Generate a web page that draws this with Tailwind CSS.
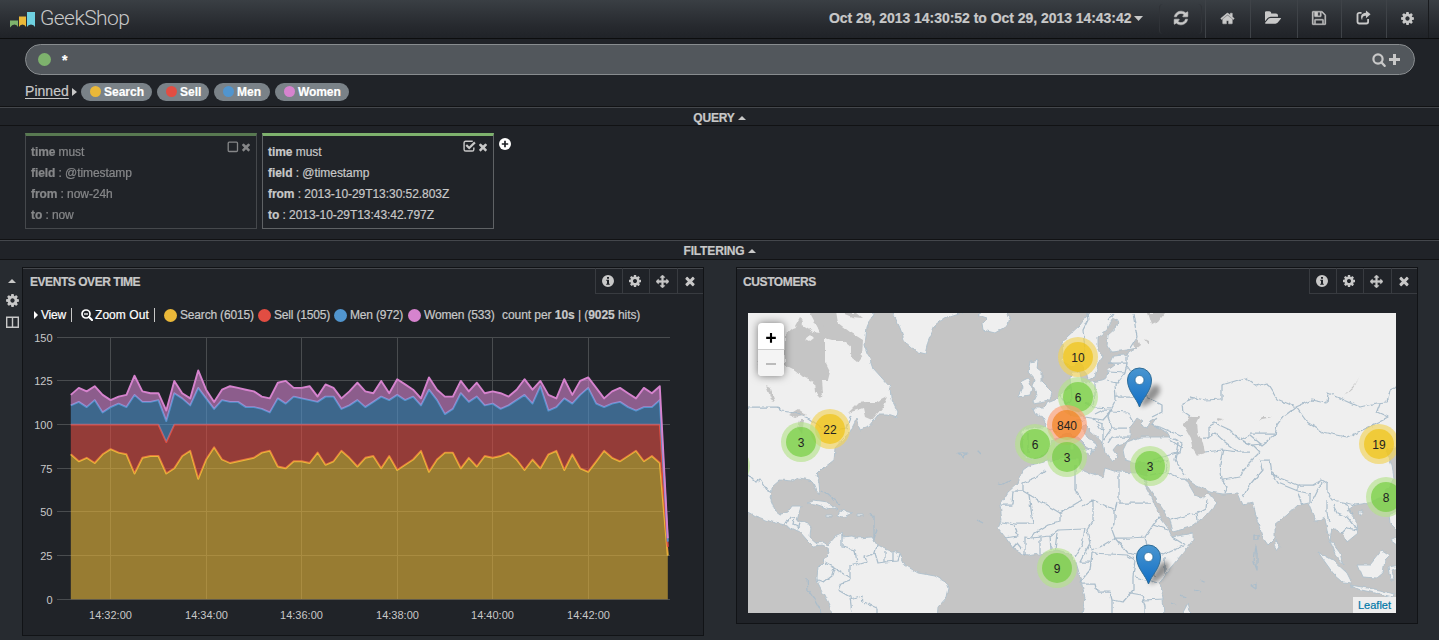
<!DOCTYPE html>
<html lang="en">
<head>
<meta charset="utf-8">
<title>GeekShop</title>
<script src="https://cdn.jsdelivr.net/npm/@tailwindcss/browser@4"></script>
</head>
<body class="w-[1439px] h-[640px] overflow-hidden bg-[#272b30] text-[#c8c8c8] text-[12px] font-['Liberation_Sans',Arial,sans-serif] [-webkit-text-stroke:0.2px_currentColor]">

<svg class="hidden">
  <defs>
    <symbol id="times" viewBox="0 0 1792 1792"><path d="M1490 1322q0 40-28 68l-136 136q-28 28-68 28t-68-28l-294-294-294 294q-28 28-68 28t-68-28l-136-136q-28-28-28-68t28-68l294-294-294-294q-28-28-28-68t28-68l136-136q28-28 68-28t68 28l294 294 294-294q28-28 68-28t68 28l136 136q28 28 28 68t-28 68l-294 294 294 294q28 28 28 68z"/></symbol>
    <symbol id="cog" viewBox="0 0 1792 1792"><path d="M1152 896q0-106-75-181t-181-75-181 75-75 181 75 181 181 75 181-75 75-181zm512-109v222q0 12-8 23t-20 13l-185 28q-19 54-39 91 35 50 107 138 10 12 10 25t-9 23q-27 37-99 108t-94 71q-12 0-26-9l-138-108q-44 23-91 38-16 136-29 186-7 28-36 28h-222q-14 0-24.500-8.500t-11.500-21.500l-28-184q-49-16-90-37l-141 107q-10 9-25 9-14 0-25-11-126-114-165-168-7-10-7-23 0-12 8-23 15-21 51-66.500t54-70.500q-27-50-41-99l-183-27q-13-2-21-12.500t-8-23.500v-222q0-12 8-23t19-13l186-28q14-46 39-92-40-57-107-138-10-12-10-24 0-10 9-23 26-36 98.500-107.500t94.500-71.500q13 0 26 10l138 107q44-23 91-38 16-136 29-186 7-28 36-28h222q14 0 24.500 8.500t11.500 21.500l28 184q49 16 90 37l142-107q9-9 24-9 13 0 25 10 129 119 165 170 7 8 7 22 0 12-8 23-15 21-51 66.500t-54 70.500q26 50 41 98l183 28q13 2 21 12.500t8 23.500z"/></symbol>
    <symbol id="refresh" viewBox="0 0 1792 1792"><path d="M1639 1056q0 5-1 7-64 268-268 434.500t-478 166.500q-146 0-282.500-55t-243.500-157l-129 129q-19 19-45 19t-45-19-19-45v-448q0-26 19-45t45-19h448q26 0 45 19t19 45-19 45l-137 137q71 66 161 102t187 36q134 0 250-65t186-179q11-17 53-117 8-23 30-23h192q13 0 22.500 9.500t9.500 22.500zm25-800v448q0 26-19 45t-45 19h-448q-26 0-45-19t-19-45 19-45l138-138q-148-137-349-137-134 0-250 65t-186 179q-11 17-53 117-8 23-30 23h-199q-13 0-22.500-9.500t-9.500-22.500v-7q65-268 270-434.500t480-166.500q146 0 284 55.500t245 156.500l130-129q19-19 45-19t45 19 19 45z" stroke="currentColor" stroke-width="60"/></symbol>
    <symbol id="home" viewBox="0 0 1792 1792"><path d="M1472 992v480q0 26-19 45t-45 19h-384v-384h-256v384h-384q-26 0-45-19t-19-45v-480q0-1 .5-3t.5-3l575-474 575 474q1 2 1 6zm223-69l-62 74q-8 9-21 11h-3q-13 0-21-7l-692-577-692 577q-12 8-24 7-13-2-21-11l-62-74q-8-10-7-23.500t11-21.500l719-599q32-26 76-26t76 26l244 204v-195q0-14 9-23t23-9h192q14 0 23 9t9 23v408l219 182q10 8 11 21.500t-7 23.500z" stroke="currentColor" stroke-width="50"/></symbol>
    <symbol id="folder" viewBox="0 0 1816 1792"><path d="M1815 952q0 31-31 66l-336 396q-43 51-120.500 86.500t-143.500 35.500h-1088q-34 0-60.500-13t-26.500-43q0-31 31-66l336-396q43-51 120.500-86.500t143.500-35.500h1088q34 0 60.500 13t26.500 43zm-343-344v160h-832q-94 0-197 47.500t-164 119.500l-337 396-5 6q0-4-.5-12.500t-.5-12.500v-960q0-92 66-158t158-66h320q92 0 158 66t66 158v32h544q92 0 158 66t66 158z"/></symbol>
    <symbol id="save" viewBox="0 0 1792 1792"><path d="M512 1536h768v-384h-768v384zm896 0h128v-896q0-14-10-38.500t-20-34.500l-281-281q-10-10-34-20t-39-10v416q0 40-28 68t-68 28h-576q-40 0-68-28t-28-68v-416h-128v1280h128v-416q0-40 28-68t68-28h832q40 0 68 28t28 68v416zm-384-928v-320q0-13-9.500-22.500t-22.500-9.500h-192q-13 0-22.500 9.500t-9.500 22.500v320q0 13 9.500 22.500t22.500 9.500h192q13 0 22.500-9.500t9.500-22.500zm640 32v928q0 40-28 68t-68 28h-1344q-40 0-68-28t-28-68v-1344q0-40 28-68t68-28h928q40 0 88 20t76 48l280 280q28 28 48 76t20 88z" stroke="currentColor" stroke-width="40"/></symbol>
    <symbol id="share" viewBox="0 0 14 14"><path d="M11.300 8.500V11a1.600 1.600 0 0 1-1.600 1.600H3A1.600 1.600 0 0 1 1.400 11V4.300A1.600 1.600 0 0 1 3 2.700h2.200" fill="none" stroke="currentColor" stroke-width="1.700"/><path d="M9.300.4 13.600 4 9.300 7.700V5.400C6.900 5.200 5.800 6.300 5.700 9.600 3.600 5.800 5.200 2.800 9.300 2.600z"/></symbol>
    <symbol id="move" viewBox="0 0 1792 1792"><path d="M1792 896q0 26-19 45l-256 256q-19 19-45 19t-45-19-19-45v-128h-384v384h128q26 0 45 19t19 45-19 45l-256 256q-19 19-45 19t-45-19l-256-256q-19-19-19-45t19-45 45-19h128v-384h-384v128q0 26-19 45t-45 19-45-19l-256-256q-19-19-19-45t19-45l256-256q19-19 45-19t45 19 19 45v128h384v-384h-128q-26 0-45-19t-19-45 19-45l256-256q19-19 45-19t45 19l256 256q19 19 19 45t-19 45-45 19h-128v384h384v-128q0-26 19-45t45-19 45 19l256 256q19 19 19 45z" stroke="currentColor" stroke-width="50"/></symbol>
    <symbol id="info" viewBox="0 0 12 12"><path fill-rule="evenodd" d="M6 0a6 6 0 1 1 0 12A6 6 0 0 1 6 0zM5 2v1.700h2V2zM4.200 4.800v1H5v2.900h-.8v1h3.600v-1H7V4.800z"/></symbol>
    <symbol id="search" viewBox="0 0 14 14"><circle cx="6" cy="6" r="4.600" fill="none" stroke="currentColor" stroke-width="2.200"/><path d="M9.300 9.300l3.300 3.500" stroke="currentColor" stroke-width="2.400" stroke-linecap="round"/></symbol>
    <symbol id="zoomout" viewBox="0 0 12 12"><circle cx="5" cy="5" r="4" fill="none" stroke="currentColor" stroke-width="1.700"/><path d="M8 8l3 3" stroke="currentColor" stroke-width="2.100" stroke-linecap="round"/><path d="M3 5h4" stroke="currentColor" stroke-width="1.300"/></symbol>
  </defs>
</svg>

<header class="flex h-[39px] items-stretch justify-between border-b border-[#0c0d0e] bg-linear-to-b from-[#3a3f44] via-[#26292e] via-70% to-[#202328]">
  <div class="flex items-center gap-[5px] pl-[10px]">
    <svg class="mt-[1px] h-[16px] w-[26px]" viewBox="0 0 26 16"><path fill="#7eb26d" d="M0 8.500h8v6.500q-1-2.500-3.500-2.500T0 15.500z"/><path fill="#eab839" d="M9 4.500h7v10.500q-1-2.500-3.500-2.500T9 15z"/><path fill="#6ed0e0" d="M17 0h8v15q-1-2.500-4-2.500t-4 2.500z"/></svg>
    <span class="-ml-px text-[21px] font-light tracking-[-0.55px] text-[#c8c8c8] font-['Roboto',sans-serif] [-webkit-text-stroke:0]">GeekShop</span>
  </div>
  <div class="flex items-stretch">
    <div class="flex w-[330px] items-center gap-[3px] pb-px text-[14px] font-bold"><span class="tracking-[-0.04px] whitespace-nowrap">Oct 29, 2013 14:30:52 to Oct 29, 2013 14:43:42</span>
      <svg class="h-[5px] w-[9px] fill-current" viewBox="0 0 9 5"><path d="M0 0h9L4.500 5z"/></svg></div>
    <div class="my-1 flex w-[43px] items-center justify-center rounded border-x border-[#303338] pb-[2px]"><svg class="size-[16px] fill-current"><use href="#refresh"/></svg></div>
    <div class="ml-[3px] flex w-[45px] items-center justify-center border-l border-[#3f4348] pr-[2px] pb-[2px]"><svg class="size-[15px] fill-current"><use href="#home"/></svg></div>
    <div class="flex w-[47px] items-center justify-center border-l border-[#3f4348] pr-[2px] pb-[3px]"><svg class="size-[16px] fill-current"><use href="#folder"/></svg></div>
    <div class="flex w-[44px] items-center justify-center border-l border-[#3f4348] pr-px pb-[2px]"><svg class="size-[16px] fill-current"><use href="#save"/></svg></div>
    <div class="flex w-[45px] items-center justify-center border-l border-[#3f4348] pr-[2px] pb-[3px]"><svg class="size-[15px] fill-current"><use href="#share"/></svg></div>
    <div class="flex w-[43px] items-center justify-center border-x border-l-[#3f4348] border-r-[#191b1e] pb-[2px]"><svg class="size-[15px] fill-current"><use href="#cog"/></svg></div>
    <div class="w-[10px]"></div>
  </div>
</header>

<section class="h-[67px] bg-[#202328] px-[25px] pt-[5px]">
  <div class="flex h-[31px] w-[1390px] items-center rounded-full border border-[#888c8f] bg-[#52575c] pr-[14px] pl-[12px]">
    <span class="size-[13px] rounded-full bg-[#7eb26d]"></span>
    <span class="mt-px ml-[11px] text-[14px] font-bold text-white">*</span>
    <svg class="ml-auto size-[14px] fill-current"><use href="#search"/></svg>
    <svg class="ml-[3px] size-[11px]" viewBox="0 0 11 11"><path d="M5.500 0v11M0 5.500h11" stroke="currentColor" stroke-width="3"/></svg>
  </div>
  <div class="mt-[7px] flex h-[19px] items-center gap-[5px]">
    <span class="flex w-[52px] items-center gap-[3px] text-[14px]"><span class="tracking-[0.04px] underline decoration-1 underline-offset-2">Pinned</span><svg class="h-[8px] w-[5px] fill-current" viewBox="0 0 5 8"><path d="M0 0l5 4-5 4z"/></svg></span>
    <span class="-ml-[1px] flex h-[18px] w-[71px] items-center gap-[3px] rounded-full bg-[#7a8288] pl-[9px] font-bold text-white"><i class="size-[11px] rounded-full bg-[#eab839]"></i>Search</span>
    <span class="flex h-[18px] w-[52px] items-center gap-[3px] rounded-full bg-[#7a8288] pl-[9px] font-bold text-white"><i class="size-[11px] rounded-full bg-[#e24d42]"></i>Sell</span>
    <span class="flex h-[18px] w-[56px] items-center gap-[3px] rounded-full bg-[#7a8288] pl-[9px] font-bold text-white"><i class="size-[11px] rounded-full bg-[#5195ce]"></i>Men</span>
    <span class="flex h-[18px] w-[74px] items-center gap-[3px] rounded-full bg-[#7a8288] pl-[9px] font-bold tracking-[-0.1px] text-white"><i class="size-[11px] rounded-full bg-[#d683ce]"></i>Women</span>
  </div>
</section>

<div class="flex h-[20px] items-center justify-center gap-[3px] border-t border-b border-[#111214] bg-[#202328] pt-[4px] font-bold tracking-[-0.15px] shadow-[inset_0_1px_0_#44474c]">QUERY <svg class="h-[4px] w-[8px] fill-current" viewBox="0 0 8 4"><path d="M0 4h8L4 0z"/></svg></div>

<section class="flex h-[113px] gap-[5px] bg-[#202328] pt-[7px] pl-[25px]">
  <div class="relative h-[96px] w-[232px] border border-t-3 border-[#5f6265] border-t-[#7eb26d] pt-[6px] pl-[5px] leading-[21px] tracking-[-0.08px] opacity-60">
    <p><b>time</b> must</p><p><b>field</b> : @timestamp</p><p><b>from</b> : now-24h</p><p><b>to</b> : now</p>
    <div class="absolute top-[4px] right-[4px] flex items-center gap-px"><svg class="size-[12px]" viewBox="0 0 12 12"><rect x="1.200" y="1.200" width="9.300" height="9.300" rx="1" fill="none" stroke="currentColor" stroke-width="1.300"/></svg><svg class="mt-px size-[12px] fill-current"><use href="#times"/></svg></div>
  </div>
  <div class="relative h-[96px] w-[232px] border border-t-3 border-[#5f6265] border-t-[#7eb26d] pt-[6px] pl-[5px] leading-[21px] tracking-[-0.05px]">
    <p><b>time</b> must</p><p><b>field</b> : @timestamp</p><p><b>from</b> : 2013-10-29T13:30:52.803Z</p><p><b>to</b> : 2013-10-29T13:43:42.797Z</p>
    <div class="absolute top-[4px] right-[4px] flex items-center gap-px"><svg class="size-[13px]" viewBox="0 0 12 12"><path d="M9 1.200H2.500Q1 1.200 1 2.700v6q0 1.500 1.500 1.500h6q1.500 0 1.500-1.500V7" fill="none" stroke="currentColor" stroke-width="1.300"/><path d="M3 4.700l2.700 2.700L11 2.200" fill="none" stroke="currentColor" stroke-width="2"/></svg><svg class="mt-px size-[12px] fill-current"><use href="#times"/></svg></div>
  </div>
  <svg class="mt-[5px] size-[12px]" viewBox="0 0 12 12"><circle cx="6" cy="6" r="6" fill="#fff"/><path d="M6 2.800v6.400M2.800 6h6.400" stroke="#202328" stroke-width="1.700"/></svg>
</section>

<div class="flex h-[21px] items-center justify-center gap-[3px] border-t border-b border-[#111214] bg-[#202328] pt-[3px] font-bold tracking-[-0.15px] shadow-[inset_0_1px_0_#44474c]">FILTERING <svg class="h-[4px] w-[8px] fill-current" viewBox="0 0 8 4"><path d="M0 4h8L4 0z"/></svg></div>

<main class="flex items-start pt-[7px]">
  <aside class="flex w-[22px] flex-col items-center gap-[9px] pt-[12px] pl-[2px]">
    <svg class="h-[4px] w-[8px] fill-current" viewBox="0 0 8 4"><path d="M0 4h8L4 0z"/></svg>
    <svg class="mt-px size-[15px] fill-current"><use href="#cog"/></svg>
    <svg class="-mt-px h-[12px] w-[13px]" viewBox="0 0 13 12"><path d="M.7 1.200h11.600v10H.7zM6.500 1v10" fill="none" stroke="currentColor" stroke-width="1.400"/></svg>
  </aside>

  <article class="h-[369px] w-[682px] border border-[#111316] bg-[#202328] shadow-[inset_0_1px_0_#44474c]">
    <div class="flex h-[26px] justify-between pl-[7px] font-bold">
      <h2 class="pt-[5px] tracking-[-0.45px]">EVENTS OVER TIME</h2>
      <div class="flex">
        <span class="flex w-[27px] items-center justify-center border-b border-l border-[#383b40] pt-px pr-[2px]"><svg class="size-[12px] fill-current"><use href="#info"/></svg></span>
        <span class="flex w-[27px] items-center justify-center border-b border-l border-[#383b40] pt-px pr-[2px]"><svg class="size-[14px] fill-current"><use href="#cog"/></svg></span>
        <span class="flex w-[28px] items-center justify-center border-b border-l border-[#383b40] pt-px pr-[2px]"><svg class="size-[13px] fill-current"><use href="#move"/></svg></span>
        <span class="flex w-[26px] items-center justify-center border-b border-l border-[#383b40] pt-px pr-[2px]"><svg class="size-[14px] fill-current"><use href="#times"/></svg></span>
      </div>
    </div>
    <div class="mt-[13px] flex h-[16px] items-center pl-[11px] tracking-[-0.18px] whitespace-nowrap">
      <svg class="h-[8px] w-[4px] fill-white" viewBox="0 0 4 8"><path d="M0 0l4 4-4 4z"/></svg>
      <span class="ml-[3px] w-[30px] text-white">View</span><span class="h-[14px] w-px bg-[#c8c8c8]"></span>
      <svg class="ml-[9px] size-[12px] text-white"><use href="#zoomout"/></svg>
      <span class="ml-[2px] w-[59px] tracking-[0.06px] text-white">Zoom Out</span><span class="h-[14px] w-px bg-[#c8c8c8]"></span>
      <i class="ml-[9px] size-[13px] rounded-full bg-[#eab839]"></i><span class="ml-[3px] w-[78px]">Search (6015)</span>
      <i class="size-[13px] rounded-full bg-[#e24d42]"></i><span class="ml-[3px] w-[60px]">Sell (1505)</span>
      <i class="size-[13px] rounded-full bg-[#5195ce]"></i><span class="ml-[3px] w-[58px]">Men (972)</span>
      <i class="size-[13px] rounded-full bg-[#d683ce]"></i><span class="ml-[3px] w-[78px]">Women (533)</span>
      <span class="tracking-[-0.06px]">count per <b>10s</b> | (<b>9025</b> hits)</span>
    </div>
    <svg id="chart" class="block h-[306px] w-[680px] font-['Liberation_Sans',Arial,sans-serif] text-[11px]" viewBox="23 323 680 306"></svg>
  </article>

  <article class="ml-[32px] h-[357px] w-[682px] border border-[#111316] bg-[#202328] shadow-[inset_0_1px_0_#44474c]">
    <div class="flex h-[26px] justify-between pl-[6px] font-bold">
      <h2 class="pt-[5px] tracking-[-0.4px]">CUSTOMERS</h2>
      <div class="flex">
        <span class="flex w-[27px] items-center justify-center border-b border-l border-[#383b40] pt-px pr-[2px]"><svg class="size-[12px] fill-current"><use href="#info"/></svg></span>
        <span class="flex w-[27px] items-center justify-center border-b border-l border-[#383b40] pt-px pr-[2px]"><svg class="size-[14px] fill-current"><use href="#cog"/></svg></span>
        <span class="flex w-[28px] items-center justify-center border-b border-l border-[#383b40] pt-px pr-[2px]"><svg class="size-[13px] fill-current"><use href="#move"/></svg></span>
        <span class="flex w-[26px] items-center justify-center border-b border-l border-[#383b40] pt-px pr-[2px]"><svg class="size-[14px] fill-current"><use href="#times"/></svg></span>
      </div>
    </div>
    <div class="relative mt-[19px] ml-[11px] h-[300px] w-[648px] overflow-hidden bg-[#c5c5c5]">
      <svg class="block h-[300px] w-[648px] font-['Liberation_Sans',Arial,sans-serif] text-[12px]" viewBox="748 313 648 300">
        <defs>
          <linearGradient id="pinfill" x1="0" y1="0" x2="0" y2="1"><stop offset="0" stop-color="#4a96d0"/><stop offset="1" stop-color="#126fc6"/></linearGradient>
          <filter id="soft" x="-50%" y="-50%" width="200%" height="200%"><feGaussianBlur stdDeviation="2.500"/></filter>
          <filter id="rough" filterUnits="userSpaceOnUse" x="740" y="305" width="664" height="316" color-interpolation-filters="sRGB"><feTurbulence type="fractalNoise" baseFrequency=".16" numOctaves="2" seed="4"/><feDisplacementMap in="SourceGraphic" scale="4" xChannelSelector="R" yChannelSelector="G"/></filter>
          <g id="pin"><path d="M1-2Q4-12 14-22 22-24 20-14 12-3 2 0z" fill="#000" opacity=".4" filter="url(#soft)"/><path d="M0 0C-3-9-12-16-12-27a12 12 0 0 1 24 0C12-16 3-9 0 0z" fill="url(#pinfill)" stroke="#2e6c97" stroke-width="1"/><circle cy="-27" r="4.500" fill="#fff" stroke="#2e6c97" stroke-width=".8"/></g>
        </defs>
        <g filter="url(#rough)">
        <g fill="#efefef" stroke="#aebfcc" stroke-width=".9" stroke-linejoin="round">
          <path d="M740 305L873 305L873 313L867 327L865 345L873 368L890 387L891 398L898 412L897 418L888 415L878 415L868 427L860 430L857 418L850 432L845 437L835 448L834 460L825 467L817 475L819 483L820 493L817 493L813 483L810 480L798 478L793 481L780 480L772 487L771 500L775 510L780 514L788 512L792 506L801 506L798 517L797 521L807 522L811 527L810 537L817 543L823 542L828 545L835 537L843 533L842 537L852 536L857 538L872 537L877 545L887 550L900 553L905 565L918 573L935 576L947 583L949 588L947 597L938 607L937 620L834 620L830 607L823 593L818 583L817 578L818 567L825 560L828 553L827 547L822 545L813 546L807 540L800 532L785 525L772 522L755 516L740 508z"/>
          <path d="M891 305L893 313L900 328L905 342L917 352L925 354L928 342L935 325L944 318L962 312L962 305z"/>
          <path d="M978 315L987 318L982 323L983 330L995 333L1008 325L1010 317L1005 310L985 310z"/>
          <path d="M1095 305L1080 325L1067 337L1062 343L1063 353L1062 362L1072 367L1080 362L1087 375L1088 380L1095 377L1098 363L1103 357L1098 350L1098 337L1107 330L1113 318L1118 320L1117 327L1108 335L1107 345L1112 352L1127 350L1137 348L1125 355L1113 356L1110 362L1115 365L1108 370L1107 378L1102 380L1087 383L1082 382L1080 372L1072 372L1070 378L1071 387L1062 393L1055 400L1047 403L1045 408L1033 408L1035 413L1043 417L1046 425L1043 428L1025 428L1022 432L1023 455L1033 460L1043 455L1050 447L1053 440L1062 436L1070 433L1078 438L1087 447L1092 450L1090 455L1097 445L1087 437L1082 428L1085 425L1090 430L1103 442L1105 452L1113 462L1118 457L1113 450L1117 445L1125 443L1130 438L1130 428L1137 418L1143 422L1140 425L1148 427L1150 422L1157 418L1152 425L1167 432L1170 437L1157 437L1140 437L1127 442L1123 450L1125 460L1137 463L1152 462L1148 470L1147 476L1137 473L1117 472L1105 468L1103 477L1090 473L1080 469L1079 458L1067 458L1053 460L1040 463L1030 465L1023 470L1018 483L1008 492L1000 505L1002 520L998 528L1005 537L1013 548L1027 556L1045 553L1057 550L1068 553L1075 560L1080 577L1083 590L1085 597L1081 620L1164 620L1163 597L1160 583L1167 572L1183 553L1193 540L1193 533L1172 537L1168 528L1160 517L1152 498L1145 485L1144 478L1148 487L1160 505L1170 520L1173 532L1190 527L1207 515L1217 503L1208 493L1202 498L1195 495L1185 478L1195 485L1210 492L1223 494L1238 493L1243 505L1253 503L1257 520L1263 538L1268 545L1275 538L1275 525L1287 515L1298 505L1308 503L1313 515L1317 522L1325 518L1328 535L1335 555L1343 565L1340 553L1330 540L1332 528L1343 533L1347 542L1358 533L1357 522L1348 510L1355 505L1368 503L1383 497L1394 478L1392 466L1386 450L1408 445L1408 300z"/>
          <path d="M1030 362L1038 360L1037 368L1042 372L1042 382L1052 392L1050 400L1033 403L1037 395L1033 387L1035 380L1028 372zM1020 382L1028 378L1032 388L1030 395L1018 397L1022 388zM1080 448L1092 450L1090 455zM1070 442h4v8h-4zM1277 539L1280 547L1277 551L1274 546zM807 503L813 500L827 502L837 510L827 508L815 504zM840 510L853 513L843 517L838 515zM826 515h6v2h-6zM857 514h6v2h-6zM1188 603L1192 618L1180 618zM1318 552L1333 560L1347 573L1352 583L1343 582L1333 573L1325 562zM1350 585L1380 590L1394 594L1393 597L1357 589zM1358 565L1370 565L1382 550L1390 555L1385 560L1383 573L1377 578L1363 577zM1358 511l5 0-3 4zM1390 515l9-5v22l-8-8zM1388 567l12-2v3l-8 2 2 10h-4zM1134 467h6l-4 2zM1390 540l8-4v10z"/>
        </g>
        <g fill="#c5c5c5">
          <path d="M785 335L793 328L802 325L813 332L820 333L818 328L810 313L810 305L835 305L838 323L850 332L863 340L862 355L857 362L851 357L852 347L843 340L832 340L825 338L825 362L830 372L828 380L822 380L823 393L820 397L815 392L814 382L803 377L795 370L785 365z"/>
          <path d="M848 413L858 403L867 402L877 402L887 397L882 408L872 420L865 417L863 408zM788 415l10-6 9 6-12 3zM766 386l4 2 5 14-3-1zM800 420l4 0-2 14-4-6zM842 313h14l6 5-10-1zM800 317l4 3-4 8-5-2zM757 360l6 5-4 6z"/>
          <path d="M1183 425L1190 417L1200 417L1197 423L1198 433L1203 443L1205 453L1197 455L1192 447L1190 437zM1148 313h17l-7 9-6 3zM1137 338l3 7-5 4-2-5zM1145 339l4 2v4zM1360 376L1353 388L1345 395L1355 384zM1258 421l4-4 11 0-11 2zM1148 570h7v6h-6zM1217 418l6 1-4 2zM818 328l8-2 2 5-6 2z"/>
        </g>
        <g fill="#efefef"><path d="M805 340l6-5 3 3-5 4zM845 318l5 1 1 4-6-2z"/></g>
        <g fill="none" stroke="#aabdcb" stroke-width="1.250" stroke-linejoin="round">
          <path d="M748 407H778L782 411L795 413L808 418L818 425L828 432L846 428L852 415M748 475L755 482L760 479L767 490L771 492M785 525L790 517H795L793 524L800 527M800 522l-2 8M842 535V547L855 550L857 563L850 565V578M857 565L867 562L865 557L875 553L877 545M875 553L878 563L885 562V552M885 562L898 561L900 554M893 552V562M825 563L834 568L832 575L823 582L818 580M834 568L850 578L850 580L842 583L838 590L850 597L852 613M850 600L862 596L863 602L877 608V613M807 578L808 590L815 600L822 613"/>
          <path d="M1045 470L1037 477L1023 483V491L1060 513L1082 500L1075 490V465M1023 491H1013L1012 505H1001M1029 495L1033 523H1015L1010 522M1060 513V522L1048 525L1035 533L1032 538L1025 537V556M1040 537V553M1050 536L1051 550M1057 533L1055 550M1032 538L1050 536L1058 530L1085 529M1002 523L1015 525L1018 536L1005 538M1013 548l4-5 4 5M1119 473V503H1151M1117 503L1115 510L1093 500L1082 507M1093 500V520L1087 530L1090 543M1115 510V523L1112 530L1115 538L1100 547L1091 550M1115 538H1130L1145 537L1153 525L1160 517M1153 525l15 5M1115 538L1127 553L1137 555M1145 537L1148 550L1163 555L1185 545L1172 537M1165 557V572M1092 553L1127 555L1135 560L1133 577V590L1123 602L1112 600L1110 592H1097L1095 584H1082M1112 600V613M1130 593L1142 595L1145 607V613M1143 600L1163 599M1135 577L1158 583M1085 529L1082 545L1075 556M1090 543L1080 562H1092M1092 553L1090 570L1080 582M1092 553L1090 545"/>
          <path d="M1171 520L1177 518L1197 513L1198 520M1197 513L1206 508L1207 500M1150 475L1165 472L1180 478L1185 478M1178 443L1175 460L1185 475M1165 472L1167 461L1152 462M1222 480L1220 463L1223 450L1205 452M1222 480L1228 487L1225 493M1223 480L1240 477L1247 465L1260 452M1223 450L1238 452L1250 452M1243 498L1248 487L1262 470L1260 460L1270 460L1272 473L1277 477L1298 485V491L1278 483L1272 473M1298 485L1313 485L1322 480L1327 483V493L1332 500L1343 502L1355 505M1298 493L1302 505M1310 493V504M1298 491L1311 494M1322 482L1312 502M1327 500V513L1329 522M1333 505L1337 513L1347 517L1357 530L1347 528L1342 533M1345 503l8 12M1260 452L1254 446L1240 440"/>
          <path d="M1197 397L1182 403L1183 412L1190 417M1190 397L1205 400L1222 399V385L1245 378L1257 386L1267 383L1277 399L1296 407L1312 400L1327 403L1328 393L1340 398L1360 407L1377 403L1387 402L1390 390L1396 387M1296 407L1307 422L1322 432L1347 437L1367 428L1388 417L1377 412L1380 404M1296 407L1283 417L1277 425L1275 435L1262 445L1250 435L1240 440L1230 430L1215 423L1208 427V438L1215 433L1225 442L1238 452M1275 433L1250 433M1240 440l12 5 10-1M1203 438h6"/>
          <path d="M1087 313L1088 320L1083 330L1085 350L1081 362M1113 313L1108 320M1133 313L1137 337L1130 348M1127 355V363L1108 363M1127 363L1125 373L1108 372M1125 373L1117 383L1107 381M1095 382V395L1093 405M1115 383L1116 400L1112 408L1093 407L1085 403M1116 397L1147 397L1137 380L1127 366M1147 397L1162 405V412L1152 417M1112 408L1108 417L1112 428H1127M1112 411L1127 412L1133 422M1060 395L1067 407L1070 415M1071 387L1072 400L1064 405M1075 410L1085 417L1103 420L1112 410M1092 420L1103 424V442M1112 428L1103 440M1108 443L1112 437H1130M1045 428L1060 433M1028 433V452M1170 437L1182 443L1180 452L1152 460M1152 425L1162 428L1183 437M1170 440L1183 448M1085 420L1070 422M1098 424l5 8M1095 414l8-4h9"/>
          <path d="M1254 535l4 0v5l-4 0zM1256 545l1 10v15l-3-8zM1250 585l6-2v6zM1200 580l6 3M1195 590l6 2M1180 595l6 2M1171 602l6 3M869 514l5 3v22l3-10M822 490l10 8 8 6M958 453l5 4 5-4zM998 483l6 1 7-4M977 520l6 3M977 450l4 4"/>
        </g>
        </g>
        <g text-anchor="middle" fill="#222">
          <circle cx="730" cy="466" r="20" fill="#b5e28c" fill-opacity=".65"/>
          <g><circle cx="830" cy="429" r="20" fill="#f1d357" fill-opacity=".65"/><circle cx="830" cy="429" r="15" fill="#f0c20c" fill-opacity=".65"/><text x="830" y="433.500">22</text></g>
          <g><circle cx="801" cy="442" r="20" fill="#b5e28c" fill-opacity=".65"/><circle cx="801" cy="442" r="15" fill="#6ecc39" fill-opacity=".65"/><text x="801" y="446.500">3</text></g>
          <g><circle cx="1078" cy="357" r="20" fill="#f1d357" fill-opacity=".65"/><circle cx="1078" cy="357" r="15" fill="#f0c20c" fill-opacity=".65"/><text x="1078" y="361.500">10</text></g>
          <g><circle cx="1078" cy="397" r="20" fill="#b5e28c" fill-opacity=".65"/><circle cx="1078" cy="397" r="15" fill="#6ecc39" fill-opacity=".65"/><text x="1078" y="401.500">6</text></g>
          <g><circle cx="1067" cy="425" r="20" fill="#fd9c73" fill-opacity=".65"/><circle cx="1067" cy="425" r="15" fill="#f18017" fill-opacity=".65"/><text x="1067" y="429.500">840</text></g>
          <g><circle cx="1035" cy="444" r="20" fill="#b5e28c" fill-opacity=".65"/><circle cx="1035" cy="444" r="15" fill="#6ecc39" fill-opacity=".65"/><text x="1035" y="448.500">6</text></g>
          <g><circle cx="1067" cy="457" r="20" fill="#b5e28c" fill-opacity=".65"/><circle cx="1067" cy="457" r="15" fill="#6ecc39" fill-opacity=".65"/><text x="1067" y="461.500">3</text></g>
          <g><circle cx="1150" cy="466" r="20" fill="#b5e28c" fill-opacity=".65"/><circle cx="1150" cy="466" r="15" fill="#6ecc39" fill-opacity=".65"/><text x="1150" y="470.500">3</text></g>
          <g><circle cx="1379" cy="444" r="20" fill="#f1d357" fill-opacity=".65"/><circle cx="1379" cy="444" r="15" fill="#f0c20c" fill-opacity=".65"/><text x="1379" y="448.500">19</text></g>
          <g><circle cx="1386" cy="497" r="20" fill="#b5e28c" fill-opacity=".65"/><circle cx="1386" cy="497" r="15" fill="#6ecc39" fill-opacity=".65"/><text x="1386" y="501.500">8</text></g>
          <g><circle cx="1057" cy="568" r="20" fill="#b5e28c" fill-opacity=".65"/><circle cx="1057" cy="568" r="15" fill="#6ecc39" fill-opacity=".65"/><text x="1057" y="572.500">9</text></g>
        </g>
        <use href="#pin" x="1139.500" y="407"/>
        <use href="#pin" x="1148.500" y="584"/>
      </svg>
      <div class="absolute top-[10px] left-[10px] flex w-[26px] flex-col overflow-hidden rounded bg-white shadow-[0_0_8px_rgba(0,0,0,0.5)]">
        <svg class="h-[27px] w-[26px] border-b border-[#ccc]" viewBox="0 0 26 27"><path d="M13 10.500v10M8 15.500h10" stroke="#000" stroke-width="2.200"/></svg>
        <svg class="h-[26px] w-[26px] bg-[#f4f4f4]" viewBox="0 0 26 26"><path d="M8 14h10" stroke="#bbb" stroke-width="2"/></svg>
      </div>
      <div class="absolute right-0 bottom-0 h-[16px] w-[43px] bg-white/70 text-center text-[11px] leading-[16px] text-[#0078a8]">Leaflet</div>
    </div>
  </article>
</main>

<script>
  // Stacked totals per 10 second bucket, lowest layer first.
  const search = [83,79,81,78,83,86,84,83,72,81,82,82,72,75,82,85,69,80,87,80,78,79,80,81,84,85,76,75,79,79,78,84,77,79,85,81,76,81,82,75,82,74,77,80,85,73,80,84,84,75,81,76,82,81,82,84,80,74,80,75,83,85,74,83,75,73,79,85,81,79,82,85,79,82,78,25];
  const sell = search.map((_, i) => i === 12 ? 90 : i === 75 ? 30 : 100);
  const men = [111,113,110,114,107,110,112,110,117,113,113,114,102,118,115,111,121,115,109,114,113,113,110,110,109,107,115,112,116,115,114,113,116,116,109,111,114,110,113,116,114,117,114,116,111,120,114,106,109,118,113,116,111,112,109,111,114,117,112,122,108,110,115,112,117,121,112,110,112,113,110,108,110,110,114,33];
  const women = [117,121,119,122,117,114,116,117,128,119,118,118,108,125,118,115,131,120,113,120,122,121,120,119,116,115,124,125,121,121,122,116,123,121,115,119,124,119,118,125,118,126,123,120,115,127,120,116,116,125,119,124,118,119,118,116,120,126,120,125,117,115,126,117,125,127,121,115,119,121,118,115,121,118,122,35];
  const X = i => 70.8 + i * 7.96, Y = v => 599.3 - v * 1.747;
  const line = a => a.map((v, i) => X(i).toFixed(1) + ' ' + Y(v).toFixed(1));
  let out = '';
  for (let v = 0; v <= 150; v += 25) {
    const y = Math.floor(Y(v)) + .5;
    out += `<path d="M57 ${y}H670" stroke="#494c4f"/><text x="52.500" y="${y + 4.500}" text-anchor="end" fill="#c8c8c8">${v}</text>`;
  }
  ['14:32:00','14:34:00','14:36:00','14:38:00','14:40:00','14:42:00'].forEach((t, i) => {
    const x = Math.floor(110.6 + i * 95.55) + .5;
    out += `<path d="M${x} 337V599" stroke="#494c4f"/><text x="${x}" y="619" text-anchor="middle" fill="#c8c8c8">${t}</text>`;
  });
  let base = search.map(() => 0);
  [[search,'#eab839'],[sell,'#e24d42'],[men,'#5195ce'],[women,'#d683ce']].forEach(([s, c]) => {
    out += `<path d="M${line(s).join('L')}L${line(base).reverse().join('L')}Z" fill="${c}" fill-opacity=".6"/>`;
    out += `<path d="M${line(s).join('L')}" fill="none" stroke="${c}" stroke-width="1.900" stroke-linejoin="round"/>`;
    base = s;
  });
  document.getElementById('chart').innerHTML = out;
</script>
</body>
</html>
